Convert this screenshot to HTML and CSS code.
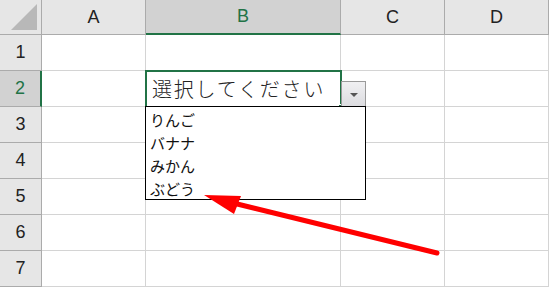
FILE: index.html
```
<!DOCTYPE html>
<html lang="ja">
<head>
    <meta charset="UTF-8">
    <meta name="viewport" content="width=device-width, initial-scale=1.0">
    <title>Dropdown list</title>
    <link rel="stylesheet" href="styles.css">
</head>
<body>

<div class="sheet">
    <!-- header row -->
    <div class="corner"><span class="corner-mark"></span></div>
    <div class="col-head">A</div>
    <div class="col-head selected">B</div>
    <div class="col-head">C</div>
    <div class="col-head">D</div>

    <div class="row-head">1</div>
    <div class="cell"></div><div class="cell"></div><div class="cell"></div><div class="cell"></div>

    <div class="row-head selected">2</div>
    <div class="cell"></div>
    <div class="cell active">
        <span class="cell-text">選択してください</span>
        <span class="fill-handle"></span>
        <!-- dropdown button + open list -->
        <span class="drop-btn"><span class="drop-tri"></span></span>
        <ul class="drop-list">
            <li>りんご</li>
            <li>バナナ</li>
            <li>みかん</li>
            <li>ぶどう</li>
        </ul>
    </div>
    <div class="cell"></div><div class="cell"></div>

    <div class="row-head">3</div>
    <div class="cell"></div><div class="cell"></div><div class="cell"></div><div class="cell"></div>
    <div class="row-head">4</div>
    <div class="cell"></div><div class="cell"></div><div class="cell"></div><div class="cell"></div>
    <div class="row-head">5</div>
    <div class="cell"></div><div class="cell"></div><div class="cell"></div><div class="cell"></div>
    <div class="row-head">6</div>
    <div class="cell"></div><div class="cell"></div><div class="cell"></div><div class="cell"></div>
    <div class="row-head">7</div>
    <div class="cell"></div><div class="cell"></div><div class="cell"></div><div class="cell"></div>

    <!-- red callout arrow -->
    <svg class="arrow" width="549" height="287" viewBox="0 0 549 287">
        <line x1="437" y1="253" x2="225" y2="201" stroke="#ff0000" stroke-width="5" stroke-linecap="round"/>
        <polygon points="204,195 241,196 234,214" fill="#ff0000"/>
    </svg>
</div>

</body>
</html>
```

FILE: styles.css
```
* {
    box-sizing: border-box;
}
body {
    margin: 0;
    background-color: #fff;
    overflow: hidden;
}
.sheet {
    position: relative;
    display: grid;
    grid-template-columns: 42px 104px 195px 104px 104px;
    grid-template-rows: 35px repeat(7, 36px);
    width: 549px;
    height: 287px;
    font-family: "Liberation Sans", Arial, sans-serif;
}
.corner {
    position: relative;
    background-color: #e6e6e6;
    border-right: 1px solid #ababab;
    border-bottom: 1px solid #ababab;
}
.corner-mark {
    position: absolute;
    right: 4px;
    bottom: 4px;
    width: 0;
    height: 0;
    border-left: 26px solid transparent;
    border-bottom: 26px solid #b8b8b8;
}
.col-head {
    display: flex;
    align-items: center;
    justify-content: center;
    background-color: #e6e6e6;
    border-right: 1px solid #ababab;
    border-bottom: 1px solid #ababab;
    font-size: 18px;
    color: #222;
}
.col-head.selected {
    background-color: #d2d2d2;
    border-bottom: 2px solid #217346;
    color: #217346;
}
.row-head {
    display: flex;
    align-items: center;
    justify-content: center;
    background-color: #e6e6e6;
    border-right: 1px solid #ababab;
    border-bottom: 1px solid #ababab;
    font-size: 18px;
    color: #222;
}
.row-head.selected {
    background-color: #d2d2d2;
    border-right: 2px solid #217346;
    color: #217346;
}
.cell {
    position: relative;
    border-right: 1px solid #d4d4d4;
    border-bottom: 1px solid #d4d4d4;
}
.cell.active {
    display: flex;
    align-items: center;
    padding-left: 6px;
}
.cell.active::after {
    content: "";
    position: absolute;
    top: -1px;
    left: -1px;
    right: -2px;
    bottom: -2px;
    border: 2px solid #217346;
}
.cell-text {
    font-family: "Noto Sans CJK JP", sans-serif;
    font-size: 20px;
    font-weight: 300;
    letter-spacing: 1.8px;
    color: #222;
}
.fill-handle {
    position: absolute;
    right: -4px;
    bottom: -4px;
    width: 6px;
    height: 6px;
    background-color: #217346;
    border: 1px solid #fff;
    z-index: 1;
}
.drop-btn {
    position: absolute;
    left: 195px;
    top: 10px;
    width: 25px;
    height: 26px;
    display: flex;
    align-items: center;
    justify-content: center;
    background: linear-gradient(#f0f0f2, #dcdce0);
    border: 1px solid #9a9a9a;
    z-index: 2;
}
.drop-tri {
    width: 0;
    height: 0;
    border-left: 4px solid transparent;
    border-right: 4px solid transparent;
    border-top: 4px solid #555;
    margin-top: 2px;
}
.drop-list {
    position: absolute;
    left: -1px;
    top: 35px;
    width: 221px;
    height: 94px;
    margin: 0;
    padding: 1px 0 0 4px;
    list-style: none;
    background-color: #fff;
    border: 1px solid #000;
    z-index: 3;
    font-family: "Noto Sans CJK JP", sans-serif;
    font-size: 15px;
    line-height: 23px;
    color: #111;
}
.arrow {
    position: absolute;
    left: 0;
    top: 0;
    pointer-events: none;
    z-index: 4;
}
```
